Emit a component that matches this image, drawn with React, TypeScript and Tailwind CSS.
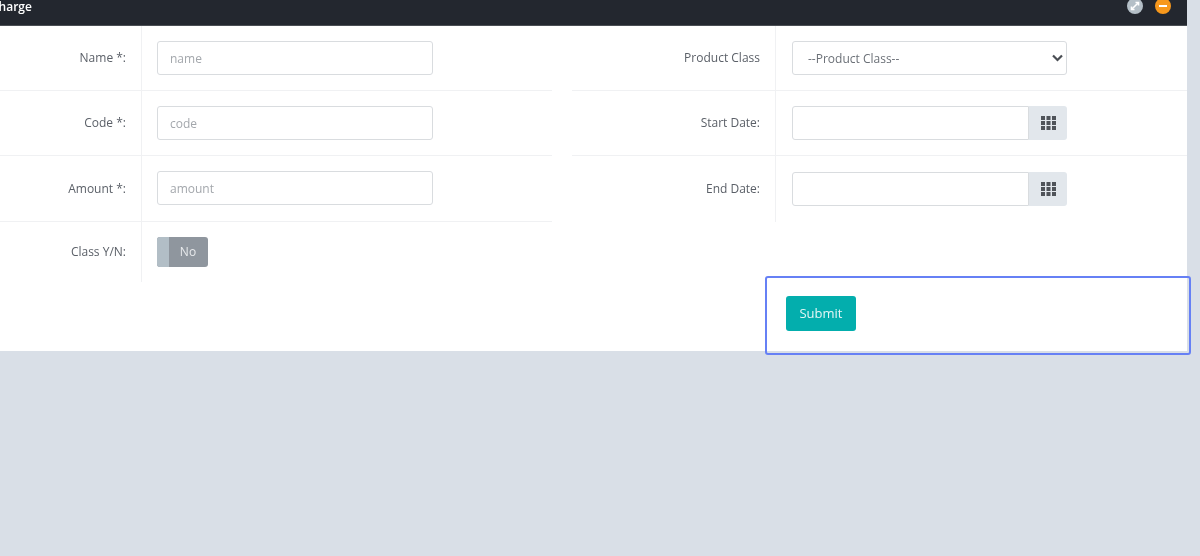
const font = "font-['Open_Sans',sans-serif]"

function Label({ children }: { children: React.ReactNode }) {
	return <label className="text-[12px] leading-none text-[#5b6068]">{children}</label>
}

function TextField({ placeholder }: { placeholder: string }) {
	return (
		<input
			placeholder={placeholder}
			className="h-[34px] w-[276px] rounded-[3px] border border-[#d9dcdf] bg-white px-[12px] text-[12px] outline-none placeholder:text-[#a3a7ac]"
		/>
	)
}

function DateField() {
	return (
		<div className="flex h-[34px] w-[275px]">
			<input className="h-full w-[237px] rounded-l-[3px] border border-[#d9dcdf] bg-white outline-none" />
			<span className="flex flex-1 items-center justify-center rounded-r-[3px] bg-[#e2e7ec]">
				<svg width="15" height="14" viewBox="0 0 15 14" fill="#4f5359">
					<rect x="0" y="0" width="4" height="4" />
					<rect x="5.5" y="0" width="4" height="4" />
					<rect x="11" y="0" width="4" height="4" />
					<rect x="0" y="5" width="4" height="4" />
					<rect x="5.5" y="5" width="4" height="4" />
					<rect x="11" y="5" width="4" height="4" />
					<rect x="0" y="10" width="4" height="4" />
					<rect x="5.5" y="10" width="4" height="4" />
					<rect x="11" y="10" width="4" height="4" />
				</svg>
			</span>
		</div>
	)
}

function LeftRow({ label, height, border = true, children }: { label: string; height: string; border?: boolean; children: React.ReactNode }) {
	return (
		<div className={`flex w-[552px] ${height} ${border ? 'border-b border-[#f0f1f3]' : ''}`}>
			<div className="flex w-[142px] items-center justify-end border-r border-[#f0f1f3] pr-[15px]">
				<Label>{label}</Label>
			</div>
			<div className="flex items-center pl-[15px]">{children}</div>
		</div>
	)
}

function RightRow({ label, height, border = true, children }: { label: string; height: string; border?: boolean; children: React.ReactNode }) {
	return (
		<div className={`flex ${height} ${border ? 'border-b border-[#f0f1f3]' : ''}`}>
			<div className="flex w-[204px] items-center justify-end border-r border-[#f0f1f3] pr-[15px]">
				<Label>{label}</Label>
			</div>
			<div className="flex items-center pl-[16px]">{children}</div>
		</div>
	)
}

export default function App() {
	return (
		<div className={`relative h-[556px] w-[1200px] overflow-hidden bg-[#d9dfe7] blur-[0.4px] ${font}`}>
			<div className="w-[1187px] bg-white">
				<div className="flex h-[26px] items-start justify-between border-b border-[#4a4e54] bg-[#23272f] pr-[16px]">
					<span className="-ml-[9px] mt-[-1px] text-[12px] leading-[16px] font-semibold text-white">Charge</span>
					<div className="mt-[-2px] flex gap-[12px]">
						<span className="flex h-[16px] w-[16px] items-center justify-center rounded-full bg-[#b4bfc7]">
							<svg width="10" height="10" viewBox="0 0 10 10" fill="none" stroke="white" strokeWidth="1.6">
								<path d="M2 8 8 2" />
								<path d="M5.5 1.5h3v3" />
								<path d="M1.5 5.5v3h3" />
							</svg>
						</span>
						<span className="flex h-[16px] w-[16px] items-center justify-center rounded-full bg-[#f7981c]">
							<span className="h-[2px] w-[8px] bg-white" />
						</span>
					</div>
				</div>
				<div className="flex">
					<div>
						<LeftRow label="Name *:" height="h-[65px]"><TextField placeholder="name" /></LeftRow>
						<LeftRow label="Code *:" height="h-[65px]"><TextField placeholder="code" /></LeftRow>
						<LeftRow label="Amount *:" height="h-[66px]">
							<div className="mb-[1px]"><TextField placeholder="amount" /></div>
						</LeftRow>
						<LeftRow label="Class Y/N:" height="h-[60px]" border={false}>
							<div className="flex h-[30px] w-[51px] overflow-hidden rounded-[3px] bg-[#8f969e]">
								<span className="w-[12px] bg-[#b2bec6]" />
								<span className="flex flex-1 items-center justify-center pr-[1px] text-[12px] text-[#e8eaec]">No</span>
							</div>
						</LeftRow>
					</div>
					<div className="ml-[20px] flex-1">
						<RightRow label="Product Class" height="h-[65px]">
							<div className="relative">
								<select className="h-[34px] w-[275px] appearance-none rounded-[3px] border border-[#d9dcdf] bg-white px-[15px] pt-[1px] text-[12px] text-[#6b7077] outline-none">
									<option>--Product Class--</option>
								</select>
								<svg className="absolute right-[4px] top-[13px]" width="11" height="8" viewBox="0 0 11 8" fill="none" stroke="#4a4e54" strokeWidth="2.2">
									<path d="M1 1.5 5.5 6 10 1.5" />
								</svg>
							</div>
						</RightRow>
						<RightRow label="Start Date:" height="h-[65px]"><DateField /></RightRow>
						<RightRow label="End Date:" height="h-[66px]" border={false}>
							<div className="mb-[1px]"><DateField /></div>
						</RightRow>
					</div>
				</div>
				<div className="flex h-[69px] items-start pl-[786px]">
					<button className="mt-[14px] h-[35px] w-[70px] rounded-[3px] bg-[#03aead] text-[13px] text-[#e4f6f5]">Submit</button>
				</div>
			</div>
			<div className="absolute left-[765px] top-[276px] h-[79px] w-[426px] rounded-[3px] border-2 border-[#6680f5]" />
		</div>
	)
}
